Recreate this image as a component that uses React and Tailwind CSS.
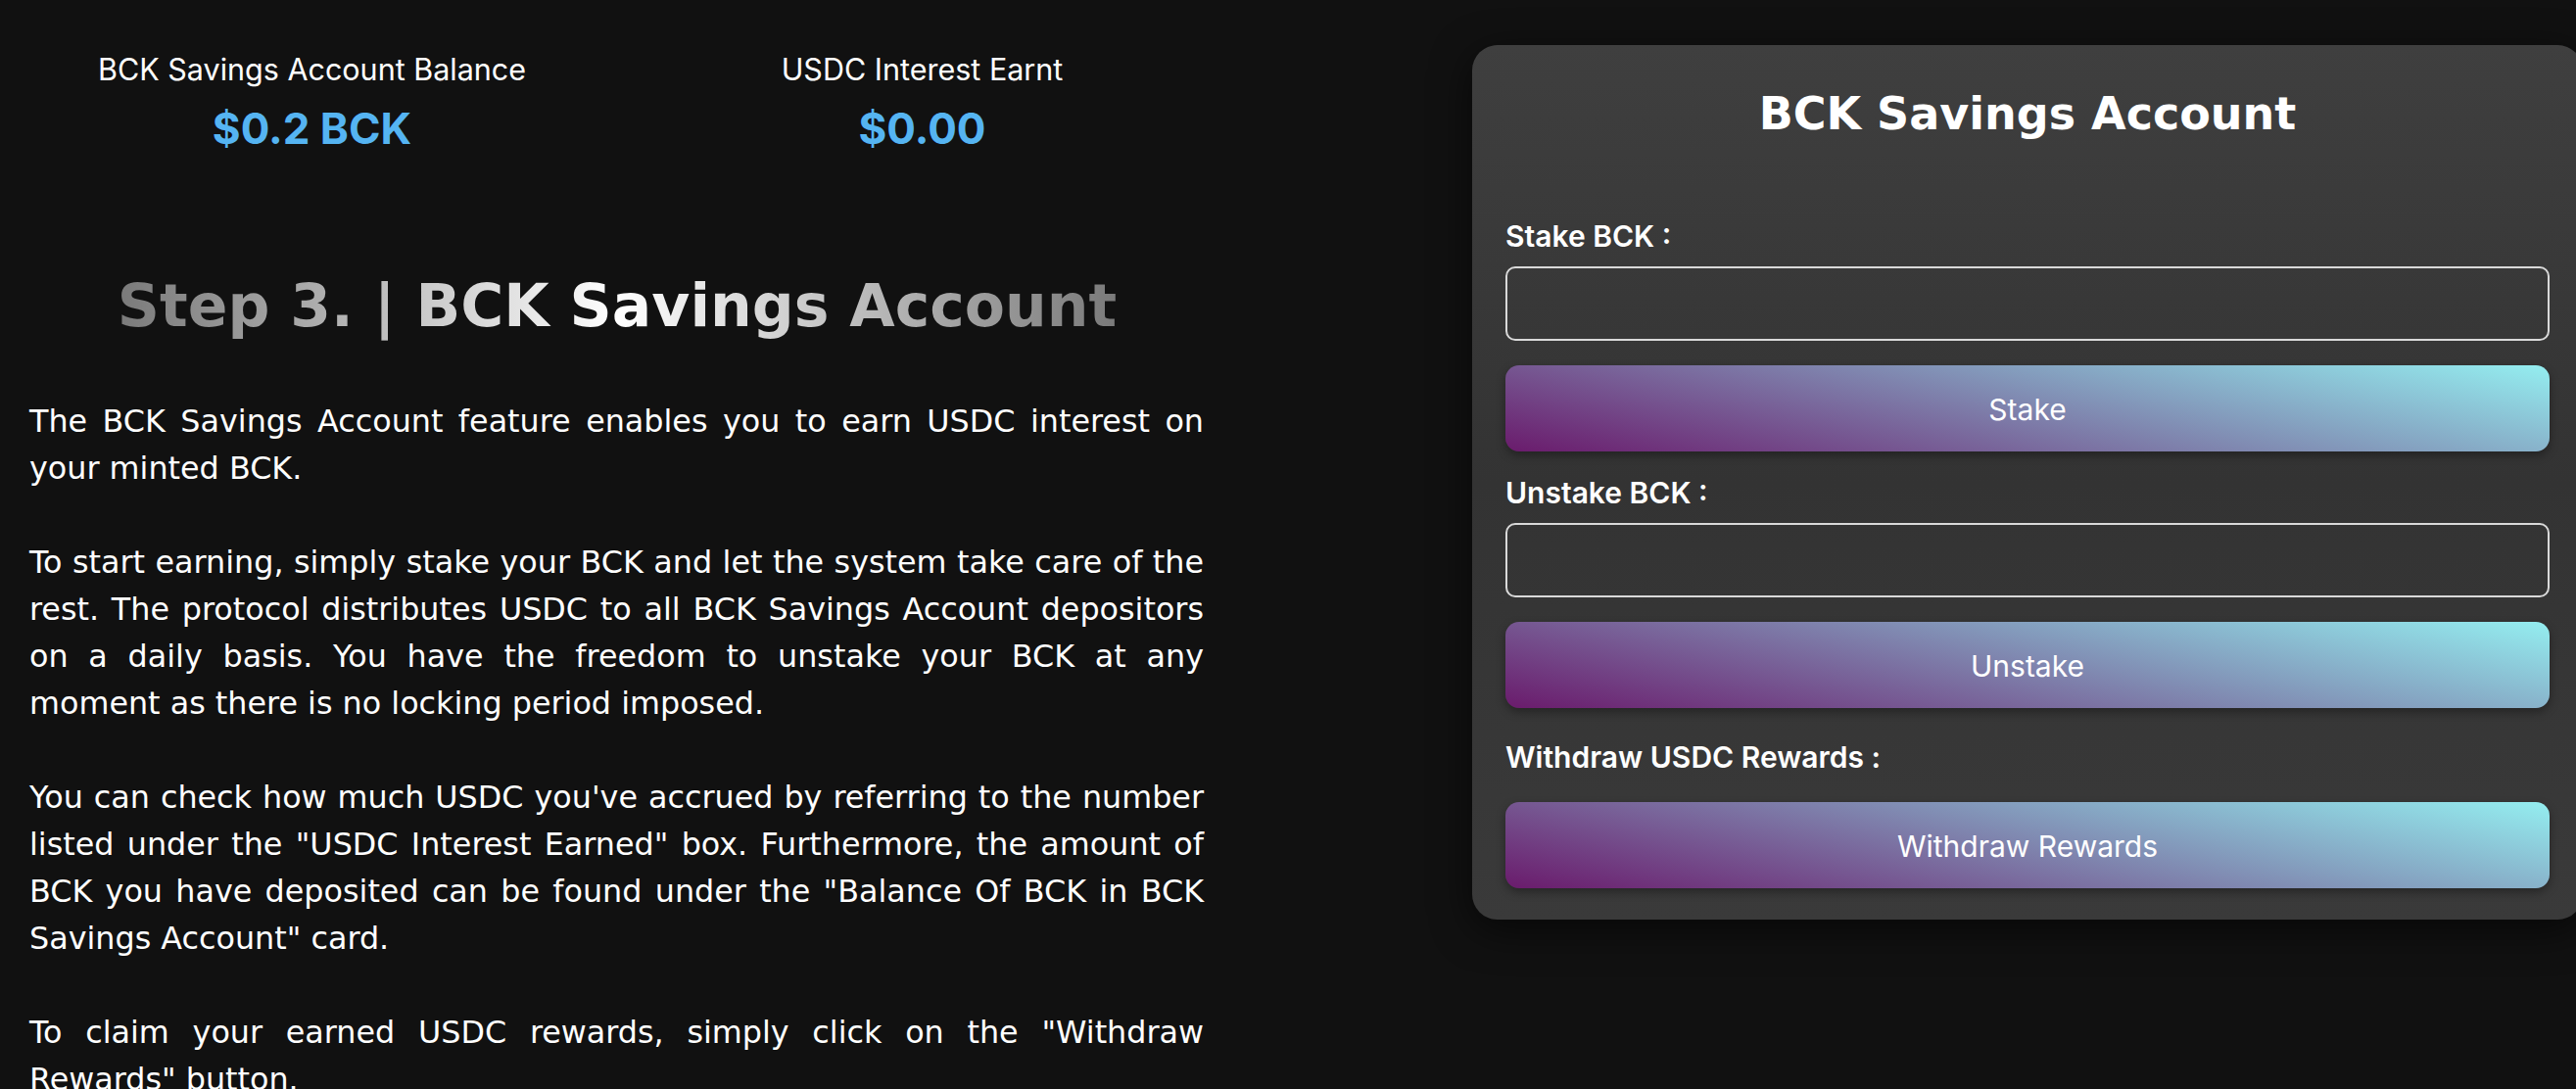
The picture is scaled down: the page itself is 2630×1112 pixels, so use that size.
import React from 'react';

const body = [
  'The BCK Savings Account feature enables you to earn USDC interest on your minted BCK.',
  'To start earning, simply stake your BCK and let the system take care of the rest. The protocol distributes USDC to all BCK Savings Account depositors on a daily basis. You have the freedom to unstake your BCK at any moment as there is no locking period imposed.',
  'You can check how much USDC you\'ve accrued by referring to the number listed under the "USDC Interest Earned" box. Furthermore, the amount of BCK you have deposited can be found under the "Balance Of BCK in BCK Savings Account" card.',
  'To claim your earned USDC rewards, simply click on the "Withdraw Rewards" button.',
];

function Stat({ label, value }) {
  return (
    <div className="flex flex-col items-center">
      <div className="text-[30.5px] leading-[36px] text-white">{label}</div>
      <div className="mt-4 text-[44px] leading-[52px] font-bold text-[#55b4f2]">{value}</div>
    </div>
  );
}

function GradientButton({ children }) {
  return (
    <button className="w-full h-[88px] rounded-[14px] bg-[linear-gradient(12deg,#6a1b6c,#94eef0)] text-white text-[30px] leading-[36px] pt-[2px] font-['Inter',sans-serif] shadow-[0_4px_10px_rgba(0,0,0,0.35)]">
      {children}
    </button>
  );
}

function Field({ label, action }) {
  return (
    <div>
      <div className="text-[30px] leading-[36px] font-semibold text-white">{label}</div>
      <input className="mt-[13px] w-full h-[76px] rounded-[10px] border-2 border-[#d9d9d9] bg-transparent outline-none" />
      <div className="mt-[25px]">
        <GradientButton>{action}</GradientButton>
      </div>
    </div>
  );
}

export default function App() {
  return (
    <div className="min-h-screen w-full overflow-hidden bg-[#111111] flex items-start font-['Inter',sans-serif]">
      {/* Left column */}
      <div className="w-[1260px] shrink-0 pt-[53px]">
        <div className="grid grid-cols-2 px-[7px]">
          <Stat label="BCK Savings Account Balance" value="$0.2 BCK" />
          <Stat label="USDC Interest Earnt" value="$0.00" />
        </div>

        <div className="mt-[119px] flex justify-center">
          <h2 className="font-['DejaVu_Sans',sans-serif] font-bold text-[60px] leading-[72px] bg-linear-to-r from-[#7a7a7a] via-white to-[#7a7a7a] bg-clip-text text-transparent">
            Step 3. | BCK Savings Account
          </h2>
        </div>

        <div className="mt-[58px] pl-[30px] pr-[31px] font-['DejaVu_Sans',sans-serif] text-[31.8px] leading-[48px] text-white text-justify flex flex-col gap-[48px]">
          {body.map((p, i) => (
            <p key={i}>{p}</p>
          ))}
        </div>
      </div>

      {/* Savings card */}
      <div className="ml-[243px] mt-[46px] w-[1134px] shrink-0 rounded-[26px] bg-linear-to-b from-[#3f3f3f] via-[#333333] to-[#3a3a3a] px-[34px] pt-[42px] pb-[32px] shadow-[0_10px_40px_rgba(0,0,0,0.6)]">
        <h3 className="text-center font-['DejaVu_Sans',sans-serif] font-bold text-[46px] leading-[56px] text-white">
          BCK Savings Account
        </h3>

        <div className="mt-[79px] flex flex-col gap-[24px]">
          <Field label="Stake BCK :" action="Stake" />
          <Field label="Unstake BCK :" action="Unstake" />
        </div>

        <div className="mt-[32px] text-[30px] leading-[36px] font-semibold text-white">Withdraw USDC Rewards :</div>
        <div className="mt-[28px]">
          <GradientButton>Withdraw Rewards</GradientButton>
        </div>
      </div>
    </div>
  );
}
